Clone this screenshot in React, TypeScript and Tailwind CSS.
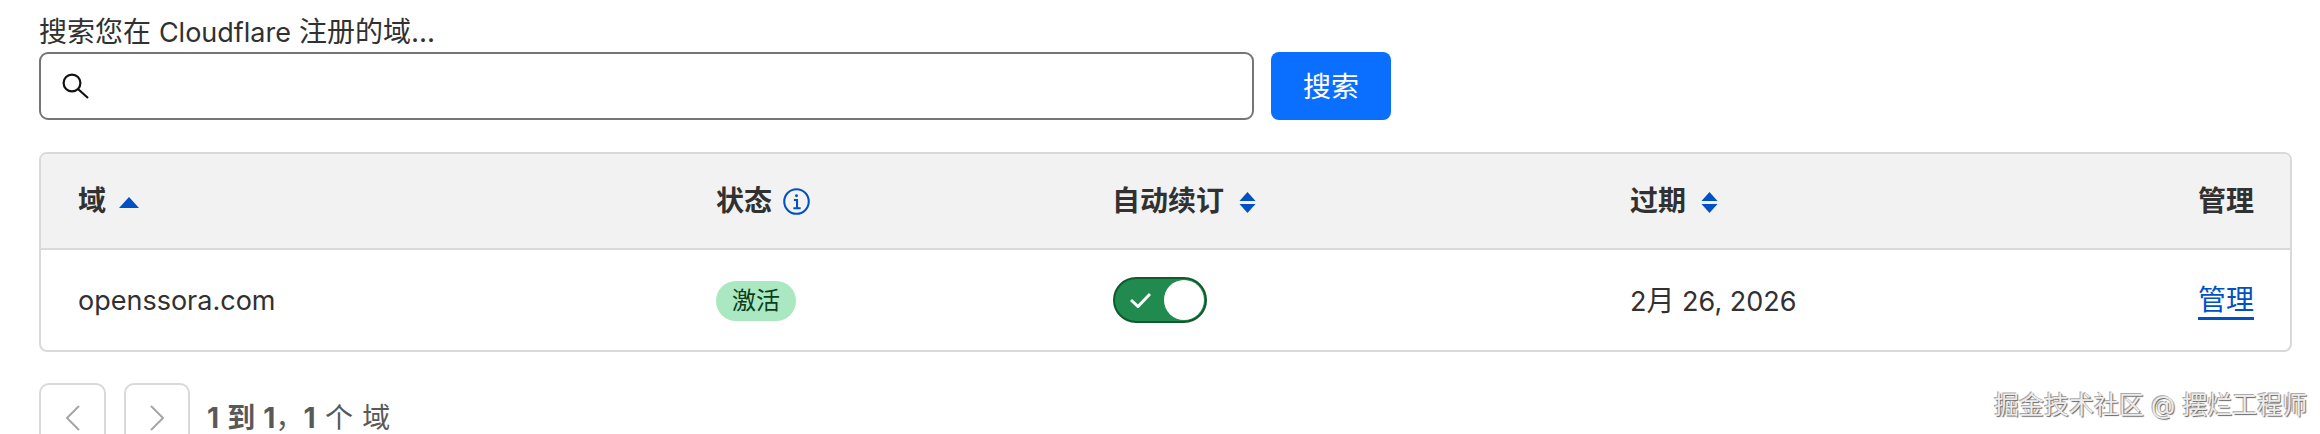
import React from 'react';

const FONT = "font-['Inter','Noto_Sans_CJK_SC',sans-serif]";

function SortIcon() {
  return (
    <svg width="17" height="21" viewBox="0 0 17 21" className="ml-[15px] mt-[3px]" fill="#0051c3">
      <path d="M8.5 0 L16.5 9 L0.5 9 Z" />
      <path d="M8.5 21 L16.5 12 L0.5 12 Z" />
    </svg>
  );
}

function SearchIcon() {
  return (
    <svg width="28" height="26" viewBox="0 0 28 26" fill="none" stroke="#111" strokeWidth="2.2">
      <circle cx="10" cy="10" r="8.4" />
      <path d="M16 16 L26 25" />
    </svg>
  );
}

function InfoIcon() {
  return (
    <svg width="27" height="27" viewBox="0 0 26 26" fill="none" stroke="#0051c3" strokeWidth="2" className="ml-[11px]">
      <circle cx="13" cy="13" r="11.8" />
      <path d="M10.5 11.5 H13.5 V19 M10 19.5 H17" />
      <circle cx="13" cy="7.5" r="1.4" fill="#0051c3" stroke="none" />
    </svg>
  );
}

function HeaderCell({ children }: { children: React.ReactNode }) {
  return <div className="flex items-center pl-[37px] text-[28px] leading-[32px] font-semibold text-[#313131]">{children}</div>;
}

function Chevron({ dir }: { dir: 'left' | 'right' }) {
  return (
    <svg width="15" height="26" viewBox="0 0 15 26" fill="none" stroke="#a6a6a6" strokeWidth="2">
      <path d={dir === 'left' ? 'M14 1 L2 13 L14 25' : 'M1 1 L13 13 L1 25'} />
    </svg>
  );
}

export default function App() {
  return (
    <div className={`relative h-[434px] w-[2320px] overflow-hidden bg-white pl-[39px] pr-[28px] ${FONT}`}>
      <div className="mt-[14px] h-[36px] text-[28px] leading-[36px] text-[#313131]">
        搜索您在 <span className="text-[27px]">Cloudflare</span> 注册的域...
      </div>

      <div className="mt-[2px] flex items-stretch gap-[17px]">
        <div className="flex h-[68px] w-[1215px] items-center rounded-[9px] border-2 border-[#757575] pl-[21px]">
          <SearchIcon />
        </div>
        <button className="flex h-[68px] w-[120px] items-center justify-center rounded-[8px] bg-[#0a6fff] pt-[2px] text-[28px] text-white">搜索</button>
      </div>

      <div className="mt-[32px] overflow-hidden rounded-[8px] border-2 border-[#d9d9d9]">
        <div className="grid h-[96px] grid-cols-[638px_396px_518px_1fr_auto] items-center border-b-2 border-[#d9d9d9] bg-[#f2f2f2]">
          <HeaderCell>
            域
            <svg width="20" height="11" viewBox="0 0 20 11" className="ml-[13px] mt-[3px]" fill="#0051c3">
              <path d="M10 0 L20 11 L0 11 Z" />
            </svg>
          </HeaderCell>
          <HeaderCell>
            状态
            <InfoIcon />
          </HeaderCell>
          <HeaderCell>
            自动续订
            <SortIcon />
          </HeaderCell>
          <HeaderCell>
            过期
            <SortIcon />
          </HeaderCell>
          <div className="pr-[36px] text-[28px] leading-[32px] font-semibold text-[#313131]">管理</div>
        </div>
        <div className="grid h-[100px] grid-cols-[637px_399px_516px_1fr_auto] items-center pt-[2px] text-[27px] leading-[32px] text-[#313131]">
          <div className="pl-[37px]">openssora.com</div>
          <div className="pl-[38px]">
            <span className="inline-flex h-[40px] w-[80px] items-center justify-center rounded-full bg-[#a9e8c1] text-[24px] text-[#0d3d20]">激活</span>
          </div>
          <div className="mb-[2px] pl-[36px]">
            <div className="flex h-[46px] w-[94px] items-center justify-between rounded-full border-[2.5px] border-[#0f5a2c] bg-[#218a4e] pl-[15px] pr-[1px]">
              <svg width="21" height="15" viewBox="0 0 21 15" fill="none" stroke="white" strokeWidth="3">
                <path d="M1 7 L8 13.5 L20 1" />
              </svg>
              <div className="h-[40px] w-[40px] rounded-full bg-white" />
            </div>
          </div>
          <div className="pl-[37px]">
            2<span className="text-[28px]">月</span> 26, 2026
          </div>
          <a className="mr-[36px] border-b-[3px] border-[#0051c3] text-[28px] leading-[34px] text-[#0051c3]">管理</a>
        </div>
      </div>

      <div className="mt-[31px] flex items-start">
        <button className="flex h-[70px] w-[67px] items-center justify-center rounded-[10px] border-2 border-[#d9d9d9]">
          <Chevron dir="left" />
        </button>
        <button className="ml-[18px] flex h-[70px] w-[66px] items-center justify-center rounded-[10px] border-2 border-[#d9d9d9]">
          <Chevron dir="right" />
        </button>
        <div className="ml-[17px] mt-[17px] text-[28px] leading-[36px] text-[#595959] [word-spacing:1.5px]">
          <b className="font-bold">1 到 1</b>，<b className="font-bold">1</b> 个 域
        </div>
      </div>

      <div className="absolute left-[1994px] top-[389px] text-[25px] leading-[32px] whitespace-nowrap text-[#ececec] [text-shadow:1px_1px_1px_#666,-1px_-1px_0_#aaa]">
        掘金技术社区 @ 摆烂工程师
      </div>
    </div>
  );
}
